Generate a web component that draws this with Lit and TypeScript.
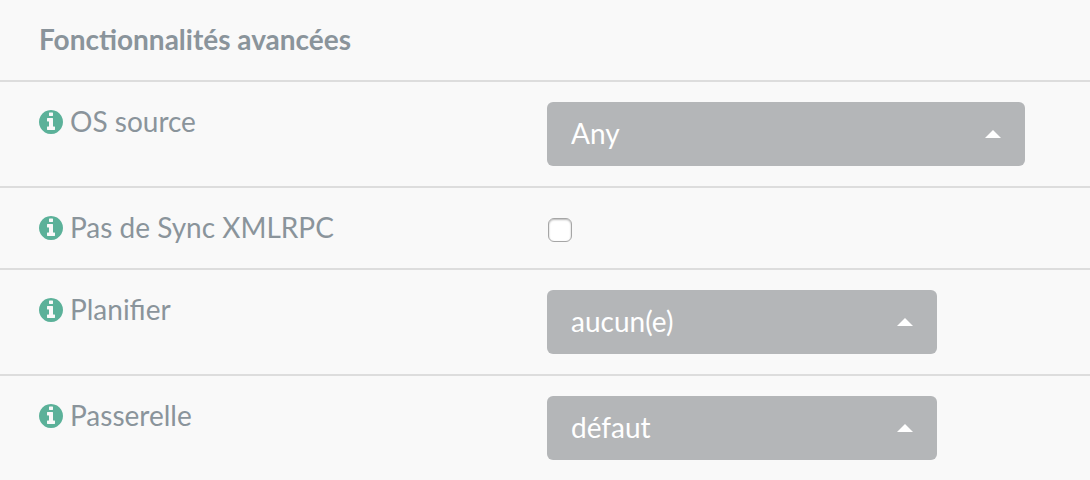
import { LitElement, html, css } from "lit";
import { customElement, property } from "lit/decorators.js";

@customElement("info-icon")
class InfoIcon extends LitElement {
  static styles = css`
    :host { display: block; width: 24px; height: 24px; flex: none; }
    svg { display: block; width: 24px; height: 24px; fill: #5bb199; }
  `;
  render() {
    return html`<svg viewBox="0 0 1536 1536" aria-hidden="true">
      <path d="M1024 1248v-160q0-14-9-23t-23-9h-96v-512q0-14-9-23t-23-9h-320q-14 0-23 9t-9 23v160q0 14 9 23t23 9h96v320h-96q-14 0-23 9t-9 23v160q0 14 9 23t23 9h448q14 0 23-9t9-23zm-128-896v-160q0-14-9-23t-23-9h-192q-14 0-23 9t-9 23v160q0 14 9 23t23 9h192q14 0 23-9t9-23zm640 416q0 209-103 385.5t-279.5 279.5-385.5 103-385.5-103-279.5-279.5-103-385.5 103-385.5 279.5-279.5 385.5-103 385.5 103 279.5 279.5 103 385.5z"></path>
    </svg>`;
  }
}

@customElement("form-row")
class FormRow extends LitElement {
  @property() label = "";
  @property() kind = "select";
  @property() value = "";
  @property({ type: Boolean, reflect: true }) wide = false;

  static styles = css`
    :host { display: block; border-top: 2px solid #dddddd; }
    .row {
      display: grid;
      grid-template-columns: 508px 1fr;
      align-items: start;
      padding: 20px 39px;
    }
    .name { display: flex; align-items: flex-start; gap: 7px; height: 40px; line-height: 38px; }
    .name info-icon { margin-top: 8px; }
    .picker { position: relative; width: 390px; max-width: 100%; }
    :host([wide]) .picker { width: 478px; }
    select {
      display: block;
      appearance: none;
      box-sizing: border-box;
      width: 100%;
      height: 64px;
      margin: 0;
      padding: 0 24px 2px;
      border: 0;
      border-radius: 6px;
      background: #b4b6b8;
      color: #fff;
      font: inherit;
    }
    .caret {
      position: absolute;
      right: 24px;
      top: 28px;
      width: 16px;
      height: 8px;
      fill: #fff;
      pointer-events: none;
    }
    .check { display: flex; align-items: flex-start; height: 40px; padding: 0 1px; }
    .check input {
      appearance: none;
      box-sizing: border-box;
      width: 24px;
      height: 24px;
      margin: 10px 0 0;
      border: 1px solid #a6a6a6;
      border-radius: 6px;
      background: #fff;
      box-shadow: inset 0 1px 2px #b8b8b8;
    }
    .check input:checked { background: #5bb199; }
  `;

  render() {
    return html`<div class="row">
      <label class="name" for="field"><info-icon></info-icon><span>${this.label}</span></label>
      ${this.kind === "check"
        ? html`<div class="check"><input id="field" type="checkbox" /></div>`
        : html`<div class="picker">
            <select id="field"><option>${this.value}</option></select>
            <svg class="caret" viewBox="0 0 16 8" aria-hidden="true"><path d="M0 8L8 0l8 8z"></path></svg>
          </div>`}
    </div>`;
  }
}

@customElement("app-root")
class AppRoot extends LitElement {
  static styles = css`
    :host {
      display: block;
      min-height: 100vh;
      background: #f9f9f9;
      color: #8a949b;
      font: 28px/40px Lato, sans-serif;
    }
    h2 { margin: 0; padding: 20px 39px 22px; font-size: 28px; line-height: 38px; font-weight: 700; }
  `;
  render() {
    return html`
      <h2>Fonctionnalités avancées</h2>
      <form-row label="OS source" value="Any" wide></form-row>
      <form-row label="Pas de Sync XMLRPC" kind="check"></form-row>
      <form-row label="Planifier" value="aucun(e)"></form-row>
      <form-row label="Passerelle" value="défaut"></form-row>
    `;
  }
}
